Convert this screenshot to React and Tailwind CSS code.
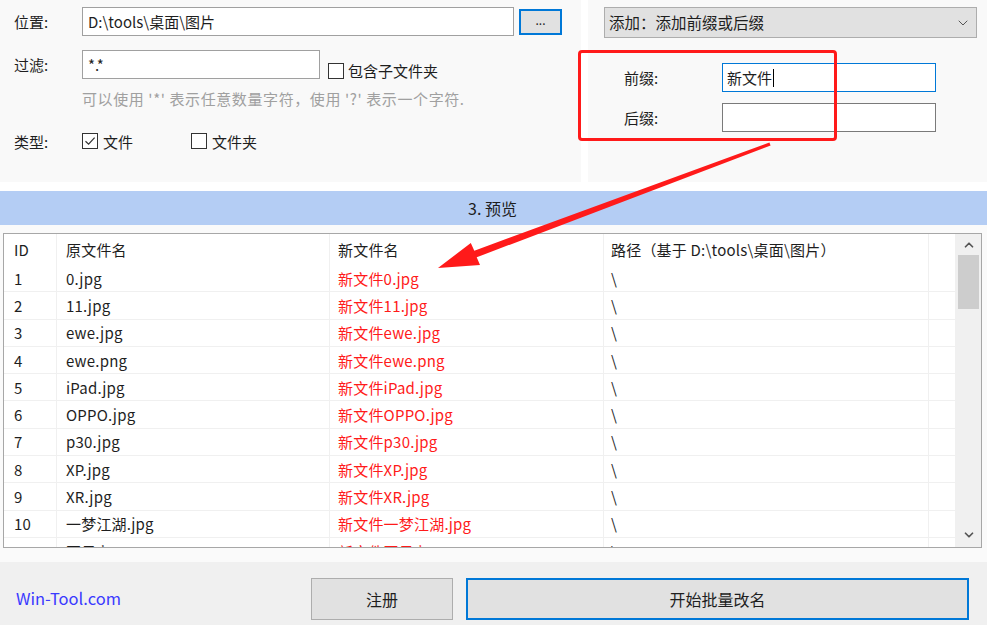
import { ChevronDown, ChevronUp } from 'lucide-react'

const FONT = { fontFamily: '"Noto Sans CJK SC", "Noto Sans", sans-serif' }

const rows = [
  ['1', '0.jpg'],
  ['2', '11.jpg'],
  ['3', 'ewe.jpg'],
  ['4', 'ewe.png'],
  ['5', 'iPad.jpg'],
  ['6', 'OPPO.jpg'],
  ['7', 'p30.jpg'],
  ['8', 'XP.jpg'],
  ['9', 'XR.jpg'],
  ['10', '一梦江湖.jpg'],
  ['11', '夏日.jpg'],
]

function Check({ checked }) {
  return (
    <span className="w-[16px] h-[16px] border border-[#333] bg-white flex items-center justify-center shrink-0">
      {checked && (
        <svg width="12" height="12" viewBox="0 0 12 12">
          <path d="M1.5 6.2 L4.6 9.2 L10.6 2.6" fill="none" stroke="#333" strokeWidth="1.2" />
        </svg>
      )}
    </span>
  )
}

function Row({ cells, header, red }) {
  const h = header ? 'h-[31px]' : 'h-[27.3px]'
  const widths = ['w-[53px] pl-[10px]', 'w-[273px] pl-[9px]', 'w-[274px] pl-[8px]', 'w-[325px] pl-[7px]', 'w-[27px]']
  return (
    <div className={`flex ${h} shrink-0 ${header ? '' : 'border-b border-[#f0f0f0]'}`}>
      {widths.map((w, i) => (
        <div
          key={i}
          className={`${w} flex items-center border-r border-[#f0f0f0] whitespace-nowrap text-[15px] tracking-[0.2px] ${
            red && i === 2 ? 'text-[#ff1a1a]' : 'text-[#1e1e1e]'
          }`}
        >
          {cells[i]}
        </div>
      ))}
    </div>
  )
}

export default function App() {
  return (
    <div className="relative w-[987px] h-[625px] bg-white overflow-hidden text-[#1e1e1e] leading-none" style={FONT}>
      {/* top panels */}
      <div className="flex h-[182px]">
        <div className="w-[581px] bg-[#f9f9f9] pt-[7px] text-[15px]">
          <div className="flex items-center h-[29px]">
            <span className="w-[82px] pl-[14px]">位置:</span>
            <div className="w-[432px] h-[29px] border border-[#a0a0a0] bg-white flex items-center pl-[5px]">D:\tools\桌面\图片</div>
            <div className="ml-[5px] w-[43px] h-[26px] border-2 border-[#0078d7] bg-[#e1e1e1] flex items-center justify-center text-[12px] pb-[4px]">...</div>
          </div>
          <div className="flex items-center h-[29px] mt-[14px]">
            <span className="w-[82px] pl-[14px]">过滤:</span>
            <div className="w-[238px] h-[29px] border border-[#a0a0a0] bg-white flex items-center pl-[5px]">*.*</div>
            <div className="ml-[8px] mt-[12px] flex items-center gap-[4px]">
              <Check />
              <span>包含子文件夹</span>
            </div>
          </div>
          <div className="pl-[82px] mt-[12px] text-[15px] tracking-[0.6px] text-[#a0a0a0] whitespace-nowrap">可以使用 '*' 表示任意数量字符，使用 '?' 表示一个字符.</div>
          <div className="flex items-center mt-[27px]">
            <span className="w-[82px] pl-[14px]">类型:</span>
            <div className="w-[109px] flex items-center gap-[5px]">
              <Check checked />
              <span>文件</span>
            </div>
            <div className="flex items-center gap-[5px]">
              <Check />
              <span>文件夹</span>
            </div>
          </div>
        </div>
        <div className="w-[7px]" />
        <div className="flex-1 bg-[#f9f9f9] pt-[7px] pl-[16px] text-[15px]">
          <div className="w-[373px] h-[31px] bg-[#e1e1e1] border border-[#adadad] flex items-center justify-between pl-[4px] pr-[5px]">
            <span className="text-[15.5px]">添加：添加前缀或后缀</span>
            <ChevronDown size={16} strokeWidth={1.5} color="#555" />
          </div>
          <div className="flex items-center mt-[25px] h-[29px]">
            <span className="w-[118px] pl-[20px]">前缀:</span>
            <div className="w-[214px] h-[29px] border border-[#0078d7] bg-white flex items-center pl-[4px]">
              新文件<span className="w-px h-[18px] bg-black ml-px" />
            </div>
          </div>
          <div className="flex items-center mt-[11px] h-[29px]">
            <span className="w-[118px] pl-[20px]">后缀:</span>
            <div className="w-[214px] h-[29px] border border-[#7a7a7a] bg-white" />
          </div>
        </div>
      </div>
      <div className="h-[9px]" />
      {/* section header */}
      <div className="h-[34px] bg-[#b4cdf4] flex items-center justify-center text-[16px] pr-[2px]">3. 预览</div>
      {/* list */}
      <div className="h-[337px] bg-[#fafafa] pt-[8px] pl-[3px] pr-[5px] pb-[14px]">
        <div className="h-full border border-[#a7a7a7] bg-white flex">
          <div className="flex-1 flex flex-col overflow-hidden">
            <Row header cells={['ID', '原文件名', '新文件名', '路径（基于 D:\\tools\\桌面\\图片）', '']} />
            {rows.map(([id, name]) => (
              <Row key={id} red cells={[id, name, '新文件' + name, '\\', '']} />
            ))}
          </div>
          <div className="w-[25px] bg-[#f0f0f0] flex flex-col items-center">
            <div className="h-[21px] flex items-center justify-center">
              <ChevronUp size={14} strokeWidth={3} color="#555" />
            </div>
            <div className="w-[21px] h-[54px] bg-[#cdcdcd]" />
            <div className="flex-1" />
            <div className="h-[21px] flex items-center justify-center mb-[2px]">
              <ChevronDown size={14} strokeWidth={3} color="#555" />
            </div>
          </div>
        </div>
      </div>
      {/* bottom bar */}
      <div className="h-[63px] bg-[#f0f0f0] flex items-center pt-[10px] text-[16px]">
        <span className="w-[311px] pl-[16px] text-[16.5px] text-[#3a3aff]">Win-Tool.com</span>
        <div className="w-[142px] h-[42px] border border-[#adadad] bg-[#e1e1e1] flex items-center justify-center">注册</div>
        <div className="ml-[13px] w-[503px] h-[42px] border-2 border-[#0078d7] bg-[#e1e1e1] flex items-center justify-center">开始批量改名</div>
      </div>

      {/* annotation: red box and arrow */}
      <div className="absolute left-[578px] top-[50px] w-[259px] h-[91px] border-[3px] border-[#ff1a1a] rounded-[4px] pointer-events-none" />
      <svg className="absolute left-0 top-0 pointer-events-none" width="987" height="625">
        <polygon
          points="438,268 480,265 476.7,257.3 770.6,145.4 769.4,142.6 474.3,250.7 470.8,243"
          fill="#ff1a1a"
        />
      </svg>
    </div>
  )
}
